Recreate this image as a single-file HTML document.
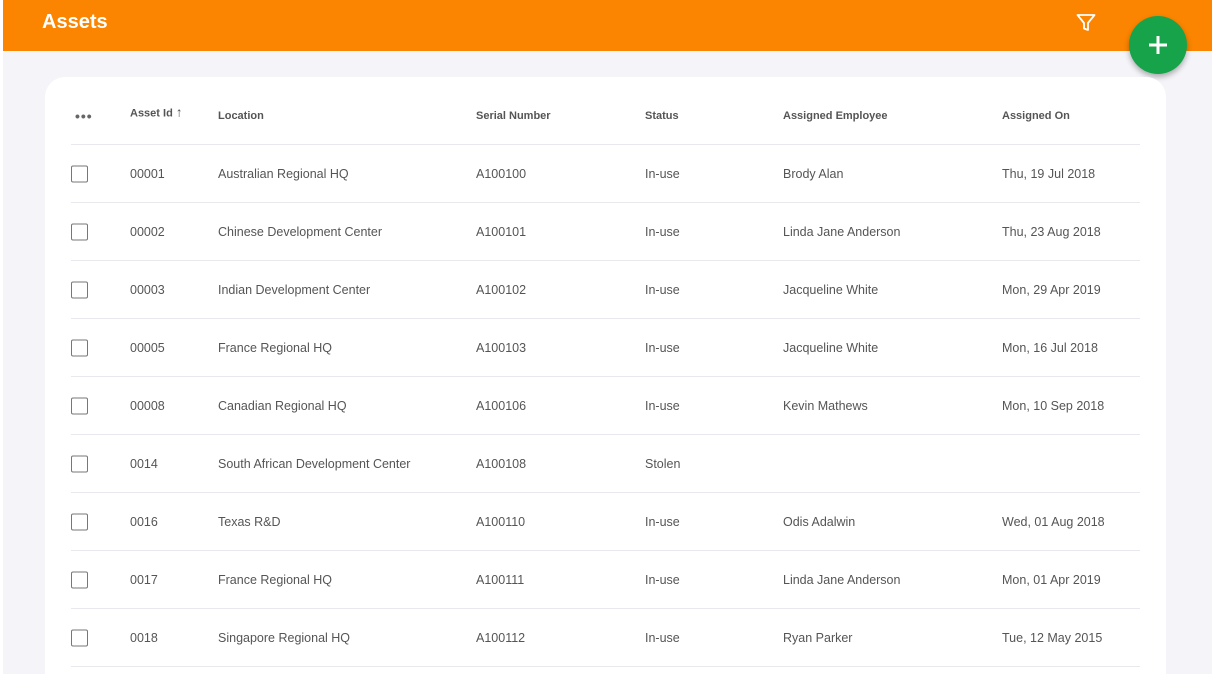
<!DOCTYPE html>
<html><head><style>
*{margin:0;padding:0;box-sizing:border-box}
body{width:1216px;height:674px;overflow:hidden;background:#fff;font-family:"Liberation Sans",sans-serif;position:relative}
.bg{position:absolute;left:3px;top:0;width:1209px;height:674px;background:#f4f4f9}
.bar{position:absolute;left:3px;top:0;width:1209px;height:51px;background:#fb8500}
.title{position:absolute;left:42px;top:11px;color:#fff;font-weight:bold;font-size:20px}
.card{position:absolute;left:45px;top:77px;width:1121px;height:620px;background:#fff;border-radius:20px}
.row{position:absolute;left:71px;width:1069px;height:58px;border-bottom:1px solid #e8e8ee;font-size:12.5px;color:#555}
.row span{position:absolute;top:50%;transform:translateY(-50%);white-space:nowrap}
.hd span{font-weight:bold;font-size:11px;color:#555}
.cb{width:17px;height:17px;border:1.5px solid #777;border-radius:2px;left:0}
.fab{position:absolute;left:1129px;top:16px;width:58px;height:58px;border-radius:50%;background:#17a34a;box-shadow:0 3px 6px rgba(0,0,0,.3)}
</style></head><body>
<div class="bg"></div>
<div class="bar"></div>
<div class="title">Assets</div>
<svg style="position:absolute;left:1076px;top:13px" width="20" height="20" viewBox="0 0 20 20"><path d="M1.5 2h17l-6.5 8v7l-4-1.5v-5.5z" fill="none" stroke="#fff" stroke-width="1.8" stroke-linejoin="round"/></svg>
<div class="fab"><svg width="58" height="58" viewBox="0 0 58 58"><path d="M29 20v18M20 29h18" stroke="#fff" stroke-width="3"/></svg></div>
<div class="card"></div>
<div class="row hd" style="top:87px">
<span style="left:4px;font-size:14px;letter-spacing:1px;color:#666">•••</span>
<span style="left:59px;top:44%">Asset Id <span style="position:static;transform:none;font-weight:normal;font-size:13px">↑</span></span>
<span style="left:147px">Location</span><span style="left:405px">Serial Number</span><span style="left:574px">Status</span><span style="left:712px">Assigned Employee</span><span style="left:931px">Assigned On</span>
</div>
<div class="row" style="top:145px"><span class="cb"></span><span style="left:59px">00001</span><span style="left:147px">Australian Regional HQ</span><span style="left:405px">A100100</span><span style="left:574px">In-use</span><span style="left:712px">Brody Alan</span><span style="left:931px">Thu, 19 Jul 2018</span></div>
<div class="row" style="top:203px"><span class="cb"></span><span style="left:59px">00002</span><span style="left:147px">Chinese Development Center</span><span style="left:405px">A100101</span><span style="left:574px">In-use</span><span style="left:712px">Linda Jane Anderson</span><span style="left:931px">Thu, 23 Aug 2018</span></div>
<div class="row" style="top:261px"><span class="cb"></span><span style="left:59px">00003</span><span style="left:147px">Indian Development Center</span><span style="left:405px">A100102</span><span style="left:574px">In-use</span><span style="left:712px">Jacqueline White</span><span style="left:931px">Mon, 29 Apr 2019</span></div>
<div class="row" style="top:319px"><span class="cb"></span><span style="left:59px">00005</span><span style="left:147px">France Regional HQ</span><span style="left:405px">A100103</span><span style="left:574px">In-use</span><span style="left:712px">Jacqueline White</span><span style="left:931px">Mon, 16 Jul 2018</span></div>
<div class="row" style="top:377px"><span class="cb"></span><span style="left:59px">00008</span><span style="left:147px">Canadian Regional HQ</span><span style="left:405px">A100106</span><span style="left:574px">In-use</span><span style="left:712px">Kevin Mathews</span><span style="left:931px">Mon, 10 Sep 2018</span></div>
<div class="row" style="top:435px"><span class="cb"></span><span style="left:59px">0014</span><span style="left:147px">South African Development Center</span><span style="left:405px">A100108</span><span style="left:574px">Stolen</span></div>
<div class="row" style="top:493px"><span class="cb"></span><span style="left:59px">0016</span><span style="left:147px">Texas R&amp;D</span><span style="left:405px">A100110</span><span style="left:574px">In-use</span><span style="left:712px">Odis Adalwin</span><span style="left:931px">Wed, 01 Aug 2018</span></div>
<div class="row" style="top:551px"><span class="cb"></span><span style="left:59px">0017</span><span style="left:147px">France Regional HQ</span><span style="left:405px">A100111</span><span style="left:574px">In-use</span><span style="left:712px">Linda Jane Anderson</span><span style="left:931px">Mon, 01 Apr 2019</span></div>
<div class="row" style="top:609px"><span class="cb"></span><span style="left:59px">0018</span><span style="left:147px">Singapore Regional HQ</span><span style="left:405px">A100112</span><span style="left:574px">In-use</span><span style="left:712px">Ryan Parker</span><span style="left:931px">Tue, 12 May 2015</span></div>
</body></html>
